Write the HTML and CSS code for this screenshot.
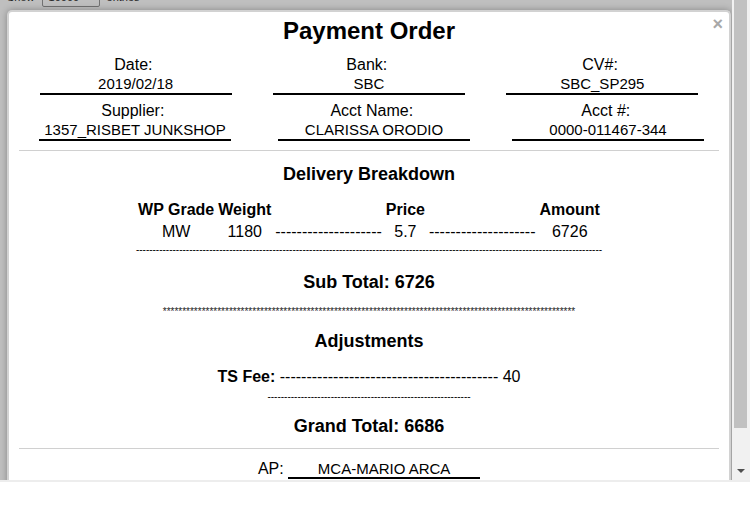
FILE: index.html
```html
<!DOCTYPE html>
<html>
<head>
<meta charset="utf-8">
<title>Payment Order</title>
<link rel="stylesheet" href="styles.css">
</head>
<body>
<div class="window">
  <div class="viewport">
    <div class="page">
      <div class="dt-length"><span>Show</span><span class="select">10000</span><span>entries</span></div>
    </div>
    <div class="backdrop"></div>
    <div class="modal">
      <span class="close">&times;</span>
      <h1 class="title">Payment Order</h1>
      <div class="info-row">
        <div class="field"><div class="label">Date:&nbsp;</div><div class="value">2019/02/18</div></div>
        <div class="field"><div class="label">Bank:&nbsp;</div><div class="value">SBC</div></div>
        <div class="field"><div class="label">CV#:&nbsp;</div><div class="value">SBC_SP295</div></div>
      </div>
      <div class="info-row info-row-2">
        <div class="field"><div class="label">Supplier:&nbsp;</div><div class="value">1357_RISBET JUNKSHOP</div></div>
        <div class="field"><div class="label">Acct Name:&nbsp;</div><div class="value">CLARISSA ORODIO</div></div>
        <div class="field"><div class="label">Acct #:&nbsp;</div><div class="value">0000-011467-344</div></div>
      </div>
      <hr class="rule">
      <h2 class="section">Delivery Breakdown</h2>
      <table class="items">
        <tr><th>WP Grade</th><th>Weight</th><th></th><th>Price</th><th></th><th>Amount</th></tr>
        <tr><td>MW</td><td>1180</td><td class="dash">--------------------</td><td>5.7</td><td class="dash">--------------------</td><td>6726</td></tr>
      </table>
      <div class="fine-line">--------------------------------------------------------------------------------------------------------------------------------------------</div>
      <h2 class="section subtotal">Sub Total: 6726</h2>
      <div class="stars">**********************************************************************************************************</div>
      <h2 class="section adjust">Adjustments</h2>
      <div class="fee"><b>TS Fee:</b> ----------------------------------------- 40</div>
      <div class="fine-line short">-------------------------------------------------------------</div>
      <h2 class="section grand">Grand Total: 6686</h2>
      <hr class="rule rule-bottom">
      <div class="approver">AP:&nbsp;<span class="sign">MCA-MARIO ARCA</span></div>
    </div>
  </div>
  <div class="scrollbar">
    <div class="thumb"></div>
    <div class="arrow-btn"><span class="arrow"></span></div>
  </div>
</div>
</body>
</html>
```

FILE: styles.css
```css
* { box-sizing: border-box; }
html, body { margin: 0; padding: 0; background: #fff; }
body { font-family: "Liberation Sans", Arial, sans-serif; color: #000; }

.window {
  display: flex;
  width: 750px;
  height: 482px;
  border-bottom: 2px solid #ededed;
}
.viewport {
  position: relative;
  width: 732px;
  height: 480px;
  overflow: hidden;
  background: #fff;
}

/* page behind the dialog */
.page { padding: 0 7px; }
.dt-length {
  display: flex;
  align-items: center;
  gap: 7px;
  height: 20px;
  margin-top: -13px;
  font-size: 11px;
  color: #333;
}
.select {
  display: inline-flex;
  align-items: center;
  width: 58px;
  height: 20px;
  padding-left: 6px;
  border: 1px solid #999;
  border-radius: 2px;
  background: #fff;
}

.backdrop {
  position: absolute;
  inset: 0;
  background: rgba(0, 0, 0, 0.25);
}

/* dialog */
.modal {
  position: absolute;
  left: 7px;
  top: 10px;
  width: 724px;
  height: 540px;
  padding: 5px 10px 0;
  background: #fff;
  border: 2px solid #d2d2d2;
  border-bottom: none;
  border-radius: 5px 5px 0 0;
  box-shadow: 0 0 7px rgba(0, 0, 0, 0.3);
  text-align: center;
}
.close {
  position: absolute;
  top: 3px;
  right: 6px;
  font-size: 18px;
  line-height: 18px;
  font-weight: bold;
  color: #a8a8a8;
}
.title {
  margin: 0 0 11px;
  font-size: 24px;
  line-height: 28px;
  font-weight: bold;
}

.info-row {
  display: grid;
  grid-template-columns: repeat(3, 1fr);
}
.info-row-2 {
  grid-template-columns: 232px 246px 1fr;
  margin-top: 7px;
}
.field {
  display: flex;
  flex-direction: column;
  align-items: center;
}
.label {
  font-size: 16px;
  line-height: 18px;
}
.value {
  width: 192px;
  font-size: 15px;
  line-height: 19px;
  border-bottom: 2px solid #000;
  white-space: nowrap;
}

.rule {
  margin: 9px 0 0;
  height: 0;
  border: 0;
  border-top: 1px solid #d0d0d0;
}
.rule-bottom { margin-top: 12px; }

.section {
  margin: 13px 0 0;
  font-size: 18px;
  line-height: 20px;
  font-weight: bold;
}
.subtotal { margin-top: 16px; }
.adjust { margin-top: 13px; }
.grand { margin-top: 13px; }

.items {
  margin: 14px auto 0;
  border-collapse: separate;
  border-spacing: 2px;
  font-size: 16px;
  line-height: 18px;
}
.items th, .items td {
  padding: 1px;
  text-align: center;
  white-space: nowrap;
}
.items th { font-weight: bold; }

.fine-line {
  font-size: 10px;
  line-height: 12px;
  white-space: nowrap;
}
.short { margin-top: 5px; }

.stars {
  margin-top: 14px;
  font-size: 10px;
  line-height: 12px;
  color: #222;
  white-space: nowrap;
}

.fee {
  margin-top: 17px;
  font-size: 16px;
  line-height: 18px;
  white-space: nowrap;
}

.approver {
  margin-top: 11px;
  font-size: 16px;
  line-height: 18px;
}
.sign {
  display: inline-block;
  width: 192px;
  font-size: 15px;
  line-height: 17px;
  border-bottom: 2px solid #000;
}

/* scrollbar */
.scrollbar {
  display: flex;
  flex-direction: column;
  width: 18px;
  height: 480px;
  background: #f1f1f1;
}
.thumb {
  height: 428px;
  margin: 0 3px 0 2px;
  background: #c1c1c1;
}
.arrow-btn {
  display: flex;
  align-items: center;
  justify-content: center;
  height: 17px;
  margin-top: auto;
  margin-bottom: 1px;
  padding-right: 1px;
}
.arrow {
  width: 0;
  height: 0;
  border-left: 4px solid transparent;
  border-right: 4px solid transparent;
  border-top: 4px solid #505050;
}
```
